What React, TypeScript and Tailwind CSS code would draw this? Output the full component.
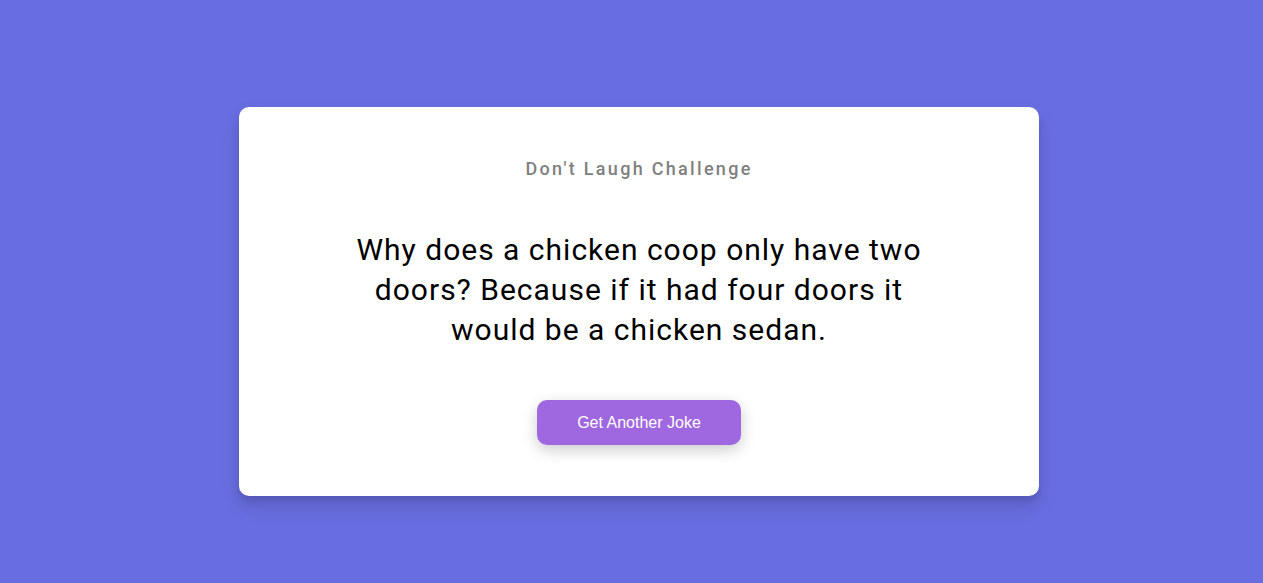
export default function App() {
  const joke =
    'Why does a chicken coop only have two doors? Because if it had four doors it would be a chicken sedan.';

  return (
    <div
      className="min-h-screen flex justify-center bg-[#686de0] pt-[107px] pl-[15px]"
      style={{ fontFamily: 'Roboto, "Liberation Sans", sans-serif' }}
    >
      <div className="w-[800px] h-[389px] bg-white rounded-[10px] shadow-[0_10px_20px_rgba(0,0,0,0.1),0_6px_6px_rgba(0,0,0,0.1)] px-[100px] pt-[51px] pb-[50px] flex flex-col items-center text-center">
        <h3 className="text-[18px] leading-[22px] font-medium tracking-[2.3px] text-[#808080]">
          Don&apos;t Laugh Challenge
        </h3>
        <p className="mt-[50px] w-[600px] text-[30px] leading-[40px] tracking-[1px] text-black">
          {joke}
        </p>
        <button
          className="mt-[50px] w-[204px] h-[45px] rounded-[10px] bg-[#9f68e0] text-white text-[16px] shadow-[0_5px_15px_rgba(0,0,0,0.2)]"
          style={{ fontFamily: '"Liberation Sans", Arial, sans-serif' }}
        >
          Get Another Joke
        </button>
      </div>
    </div>
  );
}
